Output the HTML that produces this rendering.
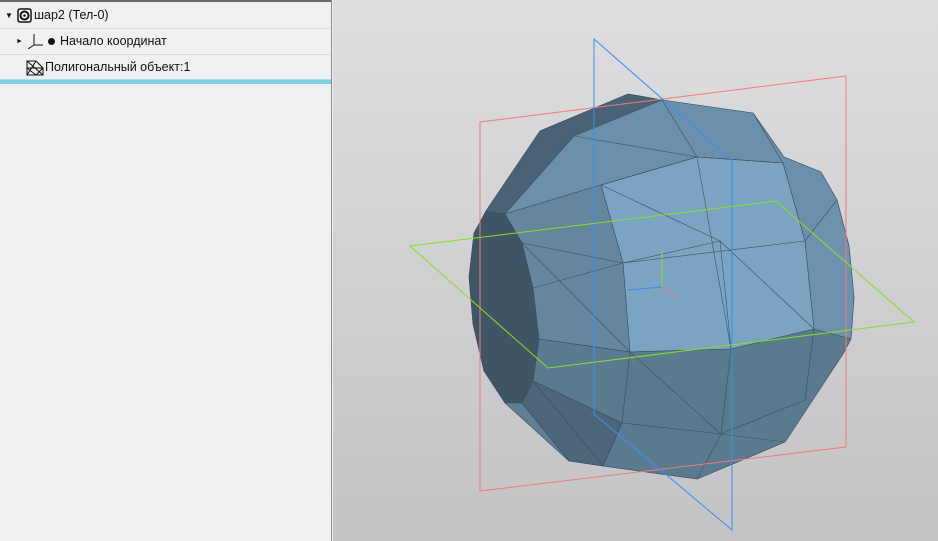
<!DOCTYPE html>
<html><head><meta charset="utf-8"><style>
body{margin:0;width:938px;height:541px;overflow:hidden;font-family:"Liberation Sans",sans-serif;position:relative;background:#f0f0f0}
#left{position:absolute;left:0;top:0;width:331px;height:541px;background:#f0f0f0;border-right:1px solid #8a8a8a}
.topb{position:absolute;left:0;top:0;width:331px;height:2px;background:#6a6a6a}
.row{position:absolute;left:0;width:331px;height:25px;border-bottom:1px solid #dcdcdc;font-size:12.5px;color:#111;line-height:25px}
.cy{position:absolute;left:0;top:79px;width:331px;height:4px;background:#7fd3e3;border-top:1px solid #a9dfe9}
#view{position:absolute;left:333px;top:0;width:605px;height:541px;background:linear-gradient(#dedee0,#c3c3c6)}
</style></head><body>
<div id="left"><div class="topb"></div>
<div class="row" style="top:3px"><span style="position:absolute;left:5px;font-size:8px">▼</span>
<svg style="position:absolute;left:17px;top:5px" width="15" height="15"><rect x="1" y="1" width="13" height="13" rx="2" fill="#fff" stroke="#111" stroke-width="1.5"/><circle cx="7.5" cy="7.5" r="4" fill="none" stroke="#111" stroke-width="2"/><circle cx="7.5" cy="7.5" r="1.3" fill="#111"/></svg>
<span style="position:absolute;left:34px">шар2 (Тел-0)</span></div>
<div class="row" style="top:29px"><span style="position:absolute;left:16px;font-size:7px">►</span>
<svg style="position:absolute;left:26px;top:4px" width="18" height="16"><path d="M8 1V12H17M8 12L2 16" stroke="#111" fill="none"/></svg>
<span style="position:absolute;left:48px;top:9px;width:7px;height:7px;border-radius:50%;background:#111"></span>
<span style="position:absolute;left:60px">Начало координат</span></div>
<div class="row" style="top:55px;border-bottom:none">
<svg style="position:absolute;left:26px;top:5px" width="18" height="16"><path d="M1 1H10L17 8V15H1Z M1 1L17 15M1 15L10 1M1 8L10 15L17 8M1 8H17" stroke="#111" fill="none" stroke-width="1"/></svg>
<span style="position:absolute;left:45px">Полигональный объект:1</span></div>
<div class="cy"></div></div>
<div id="view"></div>
<svg style="position:absolute;left:0;top:0" width="938" height="541">
<g stroke="#3e5060" stroke-width="0.6" stroke-linejoin="round">
<polygon fill="#5e7f96" points="628,94 662,100 753,113 784,157 821,172 837,200 849,246 854,297 851,339 843,354 785,442 697,479 603,466 569,461 505,403 484,371 473,324 469,277 474,233 486,211 540,131"/>
<polygon fill="#6b90ac" points="540,131 628,94 662,100 753,113 784,157 821,172 837,200 805,241 783,163 697,157 601,185 505,214 486,211"/>
<polygon fill="#7aa4c2" points="601,185 697,157 783,163 805,241 814,329 731,349 630,352 623,263"/>
<polygon fill="#6d92ae" points="805,241 837,200 849,246 854,297 851,339 814,329"/>
<polygon fill="#65869f" points="505,214 601,185 623,263 630,352 539,339 533,288 522,243"/>
<polygon fill="#5a7a90" points="539,339 630,352 731,349 814,329 851,339 843,354 785,442 697,479 603,466 569,461 522,403 533,381"/>
<polygon fill="#4d667a" points="533,381 622,423 603,466 569,461 522,403"/>
<polygon fill="#3f5566" points="486,211 505,214 522,243 533,288 539,339 533,381 522,403 505,403 484,371 473,324 469,277 474,233"/>
<polygon fill="#4a6276" points="540,131 628,94 662,100 574,136 505,214 486,211"/>
<g fill="none">
<path d="M574,136 L697,157 L783,163 M662,100 L697,157 L731,349 L721,434 L697,479 M753,113 L783,163 M601,185 L697,157 M522,243 L623,263 L805,241 M533,288 L623,263 M630,352 L622,423 L603,466 M539,339 L630,352 L721,434 L785,442 M533,381 L622,423 L721,434 M484,371 L533,288 M473,324 L522,243 M720,241 L814,329 M601,185 L720,241 L623,263 M522,243 L630,352 M533,381 L603,466 M720,241 L731,349 M814,329 L805,400 L721,434"/>
</g></g>
<polygon points="480,122 846,76 846,447 480,491" fill="none" stroke="#f07a7a" stroke-width="1"/>
<polygon points="594,39 732,160 732,530 594,414" fill="none" stroke="#3a8ef0" stroke-width="1"/>
<polygon points="410,246 776,201 914,322 548,368" fill="none" stroke="#88e020" stroke-width="1"/>
<path d="M662,287V251" stroke="#88e020"/><path d="M662,287L627,290" stroke="#3a8ef0"/><path d="M662,287L676,297" stroke="#f07a7a"/>
</svg>
</body></html>
